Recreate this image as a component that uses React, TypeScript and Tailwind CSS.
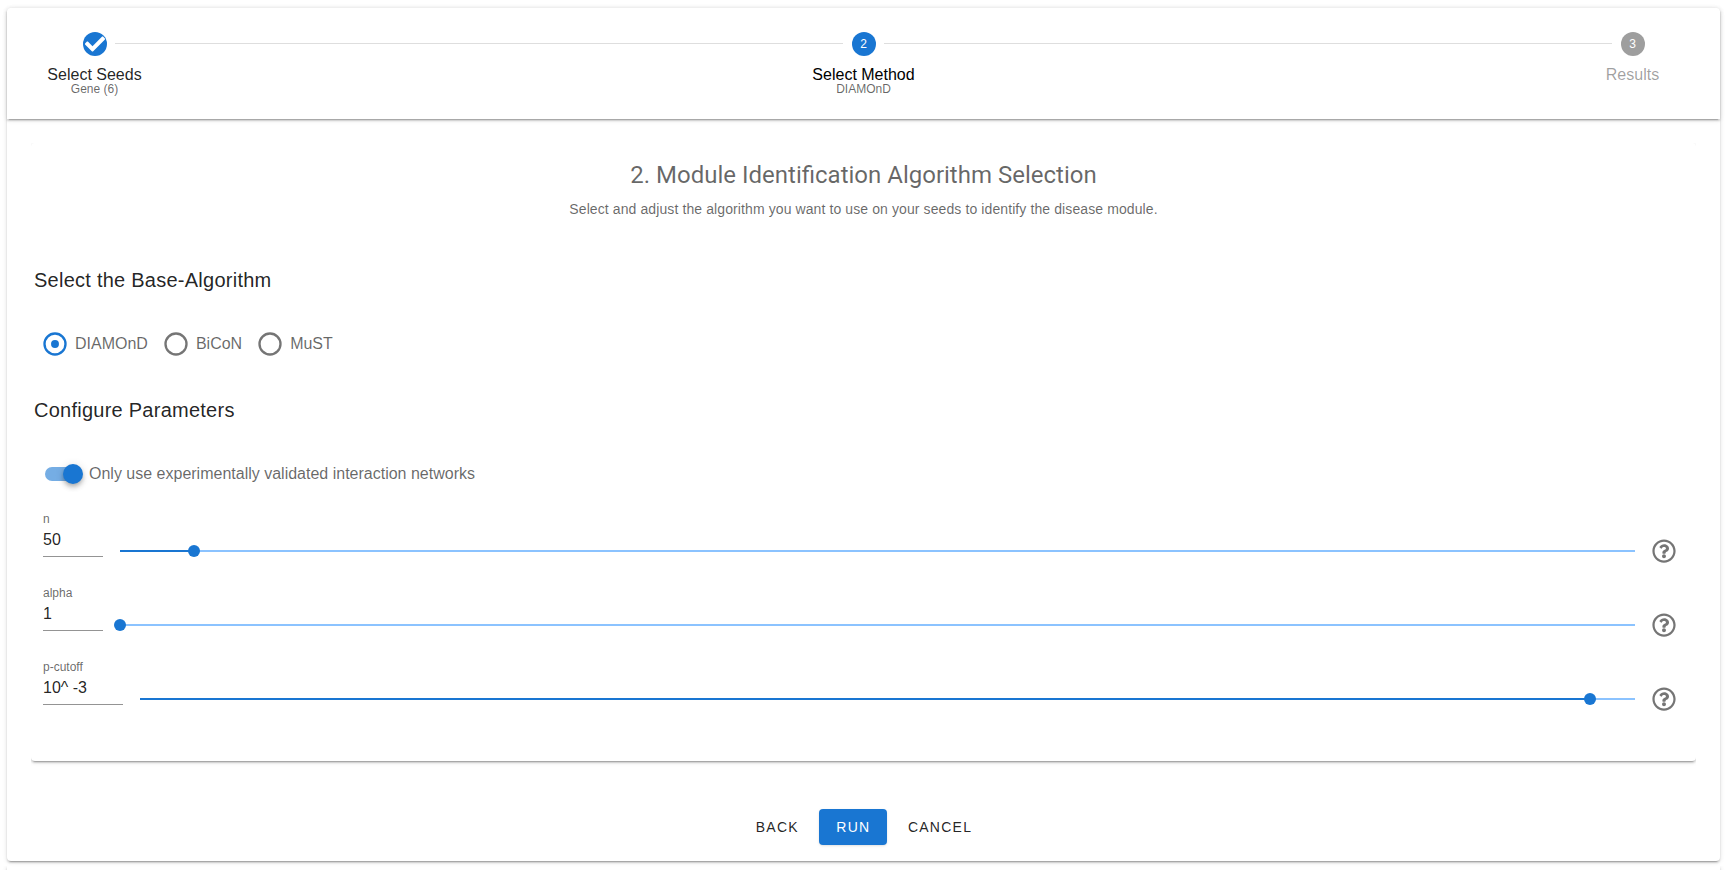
import React from "react";
import { FaCheck, FaRegQuestionCircle } from "react-icons/fa";

const card =
  "shadow-[0_3px_1px_-2px_rgba(0,0,0,.2),0_2px_2px_0_rgba(0,0,0,.14),0_1px_5px_0_rgba(0,0,0,.12)]";

function Step({ badge, title, note, circle, tone }: {
  badge: React.ReactNode; title: string; note?: string; circle: string; tone: string;
}) {
  return (
    <div className="flex w-[175px] shrink-0 flex-col items-center pt-6">
      <div className={`flex size-6 items-center justify-center rounded-full text-xs text-white ${circle}`}>{badge}</div>
      <div className={`mt-[11px] text-base leading-4 ${tone}`}>{title}</div>
      {note && <div className="text-xs leading-3 text-black/60">{note}</div>}
    </div>
  );
}

function Radio({ label, checked }: { label: string; checked?: boolean }) {
  return (
    <label className="mr-4 flex h-6 items-center">
      <svg viewBox="0 0 24 24" className={`mr-1.5 -ml-0.5 size-[28px] ${checked ? "text-[#1976d2]" : "text-black/54"}`} fill="currentColor">
        <path d="M12,20A8,8 0 0,1 4,12A8,8 0 0,1 12,4A8,8 0 0,1 20,12A8,8 0 0,1 12,20M12,2A10,10 0 0,0 2,12A10,10 0 0,0 12,22A10,10 0 0,0 22,12A10,10 0 0,0 12,2Z" />
        {checked && <circle cx="12" cy="12" r="3.4" />}
      </svg>
      <span>{label}</span>
    </label>
  );
}

function Param({ label, value, field, fill }: { label: string; value: string; field: string; fill: number }) {
  return (
    <div className="flex h-[74px]">
      <div className={`mr-[17px] h-[45px] shrink-0 border-b border-[#949494] ${field}`}>
        <div className="text-xs leading-[14px] text-black/60">{label}</div>
        <div className="mt-1 text-base leading-5 text-black/87">{value}</div>
      </div>
      <div className="relative mt-[38px] h-0.5 flex-1 bg-[#8bc3ff]">
        <div className="h-0.5 bg-[#1976d2]" style={{ width: `${fill}%` }} />
        <div className="absolute -top-[5px] -ml-1.5 size-3 rounded-full bg-[#1976d2]" style={{ left: `${fill}%` }} />
      </div>
      <FaRegQuestionCircle className="mt-[27px] ml-[17px] size-6 text-black/54" />
    </div>
  );
}

export default function App() {
  return (
    <div className="flex h-[870px] flex-col overflow-hidden bg-white pt-2 pr-2 pl-[7px] font-['Liberation_Sans',sans-serif] text-black/60">
      <div className={`h-[853px] shrink-0 rounded ${card}`}>
        <div className={`flex h-[111px] rounded-t ${card}`}>
          <Step
            title="Select Seeds" note="Gene (6)" circle="bg-[#1976d2]" tone="text-black/87"
            badge={<FaCheck className="size-5" />}
          />
          <div className="-mx-[67px] mt-[35px] h-px flex-1 bg-black/13" />
          <Step title="Select Method" note="DIAMOnD" badge="2" circle="bg-[#1976d2]" tone="text-black" />
          <div className="-mx-[67px] mt-[35px] h-px flex-1 bg-black/13" />
          <Step title="Results" badge="3" circle="bg-[#9e9e9e]" tone="text-black/38" />
        </div>

        <div className="px-6 pt-6">
          <div className={`h-[618px] rounded [clip-path:inset(0_0_-8px_0)] ${card}`}>
            <h1 className="pt-4 text-center font-[Roboto,sans-serif] text-2xl leading-8">2. Module Identification Algorithm Selection</h1>
            <p className="mt-[7px] text-center text-sm leading-[22px] tracking-[.1px]">Select and adjust the algorithm you want to use on your seeds to identify the disease module.</p>

            <h2 className="mt-[44px] ml-[3px] text-xl leading-8 tracking-[.25px] text-black/87">Select the Base-Algorithm</h2>
            <div className="mt-[36px] ml-3 flex">
              <Radio label="DIAMOnD" checked />
              <Radio label="BiCoN" />
              <Radio label="MuST" />
            </div>

            <h2 className="mt-[38px] ml-[3px] text-xl leading-8 tracking-[.25px] text-black/87">Configure Parameters</h2>
            <div className="mt-[36px] ml-3.5 flex h-6 items-center">
              <div className="mr-1.5 flex h-[14px] w-[38px] items-center justify-end rounded-full bg-gradient-to-r from-[#75ade4] from-90% to-transparent to-90%">
                <div className="size-5 shrink-0 rounded-full bg-[#1976d2] shadow-[0_2px_4px_-1px_rgba(0,0,0,.2),0_4px_5px_0_rgba(0,0,0,.14),0_1px_10px_0_rgba(0,0,0,.12)]" />
              </div>
              <span>Only use experimentally validated interaction networks</span>
            </div>

            <div className="mt-[26px] mr-5 ml-3">
              <Param label="n" value="50" field="w-[60px]" fill={4.9} />
              <Param label="alpha" value="1" field="w-[60px]" fill={0} />
              <Param label="p-cutoff" value="10^ -3" field="w-[80px]" fill={97} />
            </div>
          </div>

          <div className="mt-12 flex justify-center pl-px text-sm tracking-[1.25px] text-black/87">
            <button className="h-9 px-4">BACK</button>
            <button className="mr-[5px] ml-1 h-9 w-[68px] rounded bg-[#1976d2] pl-px text-white shadow-sm">RUN</button>
            <button className="h-9 px-4">CANCEL</button>
          </div>
        </div>
      </div>
      <div className={`mt-[5px] h-10 shrink-0 [clip-path:inset(0_-6px)] ${card}`} />
    </div>
  );
}
